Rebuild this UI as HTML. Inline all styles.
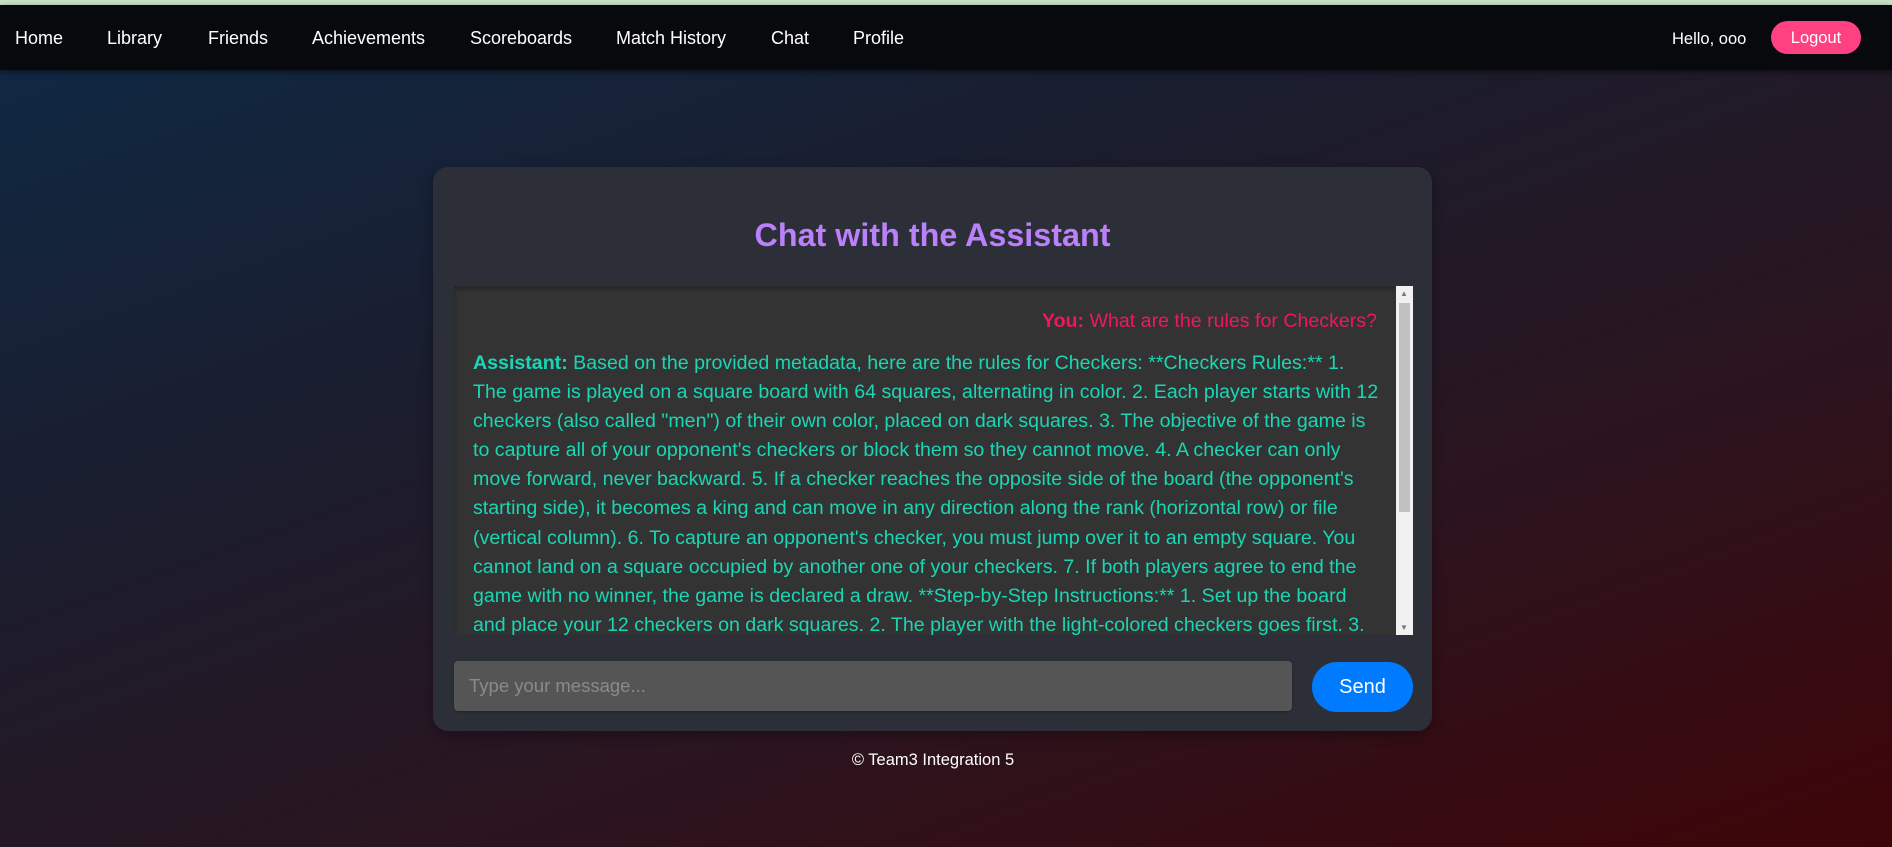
<!DOCTYPE html>
<html><head><meta charset="utf-8"><style>
*{margin:0;padding:0;box-sizing:border-box}
body{width:1892px;height:847px;overflow:hidden;font-family:"Liberation Sans",Arial,sans-serif;position:relative;
background:linear-gradient(160deg,#0e2a45 0%,#1a1d2e 35%,#2a1520 65%,#3e0508 100%);}
.top{position:absolute;left:0;top:0;width:1892px;height:5px;background:#c9e2c9}
nav{position:absolute;left:0;top:5px;width:1892px;height:65px;background:#07090d;box-shadow:0 2px 6px rgba(0,0,0,.5)}
nav a{position:absolute;top:23px;color:#fff;font-size:18px;text-decoration:none;white-space:nowrap}
.hello{position:absolute;left:1672px;top:25px;color:#fff;font-size:16.5px}
.logout{position:absolute;left:1771px;top:16px;width:90px;height:33px;border-radius:17px;background:#ff4081;color:#fff;font-size:16.5px;text-align:center;line-height:35px}
.card{position:absolute;left:433px;top:167px;width:999px;height:564px;background:#2c2f37;border-radius:15px;box-shadow:0 4px 12px rgba(0,0,0,.3)}
h1{position:absolute;left:0;width:999px;top:50px;text-align:center;color:#bb80fc;font-size:32.3px;font-weight:bold}
.box{position:absolute;left:21px;top:119px;width:959px;height:349px;background:#333;box-shadow:inset 0 3px 5px rgba(0,0,0,.3);overflow:hidden}
.you{position:absolute;right:36px;top:24px;color:#f0185a;font-size:19.6px;white-space:nowrap}
.asst{position:absolute;left:19px;top:63px;color:#1ad6b4;font-size:19.6px;line-height:29.1px;white-space:nowrap}
.sb{position:absolute;right:0;top:0;width:17px;height:349px;background:#f1f1f1}
.thumb{position:absolute;left:3px;top:17px;width:11px;height:209px;background:#c1c1c1}
.ar{position:absolute;left:4px;font-size:8px;color:#777}
.inp{position:absolute;left:21px;top:494px;width:838px;height:50px;background:#555;border-radius:4px;color:#8a8a8a;font-size:18.5px;padding-left:15px;line-height:50px;box-shadow:0 1px 2px rgba(0,0,0,.3)}
.send{position:absolute;left:879px;top:495px;width:101px;height:50px;background:#007bff;border-radius:25px;color:#fff;font-size:20px;text-align:center;line-height:50px}
.foot{position:absolute;left:0;width:1866px;top:751px;text-align:center;color:#fff;font-size:16.5px}
</style></head><body>
<div class="top"></div>
<nav>
<a style="left:15px">Home</a><a style="left:107px">Library</a><a style="left:208px">Friends</a><a style="left:312px">Achievements</a><a style="left:470px">Scoreboards</a><a style="left:616px">Match History</a><a style="left:771px">Chat</a><a style="left:853px">Profile</a>
<span class="hello">Hello, ooo</span><span class="logout">Logout</span>
</nav>
<div class="card">
<h1>Chat with the Assistant</h1>
<div class="box">
<div class="you"><b>You:</b> What are the rules for Checkers?</div>
<div class="asst"><b>Assistant:</b> Based on the provided metadata, here are the rules for Checkers: **Checkers Rules:** 1.<br>The game is played on a square board with 64 squares, alternating in color. 2. Each player starts with 12<br>checkers (also called "men") of their own color, placed on dark squares. 3. The objective of the game is<br>to capture all of your opponent's checkers or block them so they cannot move. 4. A checker can only<br>move forward, never backward. 5. If a checker reaches the opposite side of the board (the opponent's<br>starting side), it becomes a king and can move in any direction along the rank (horizontal row) or file<br>(vertical column). 6. To capture an opponent's checker, you must jump over it to an empty square. You<br>cannot land on a square occupied by another one of your checkers. 7. If both players agree to end the<br>game with no winner, the game is declared a draw. **Step-by-Step Instructions:** 1. Set up the board<br>and place your 12 checkers on dark squares. 2. The player with the light-colored checkers goes first. 3.</div>
<div class="sb"><span class="ar" style="top:3px">▲</span><div class="thumb"></div><span class="ar" style="bottom:3px">▼</span></div>
</div>
<div class="inp">Type your message...</div>
<div class="send">Send</div>
</div>
<div class="foot">© Team3 Integration 5</div>
</body></html>
